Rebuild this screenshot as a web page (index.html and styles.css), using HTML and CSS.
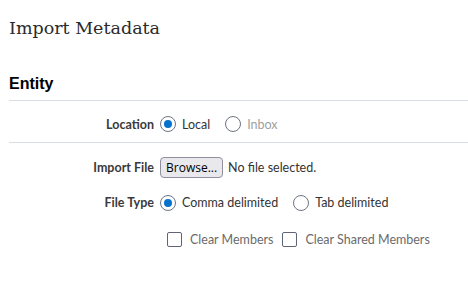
FILE: index.html
```html
<!DOCTYPE html>
<html lang="en">
<head>
    <meta charset="UTF-8">
    <title>Import Metadata</title>
    <link rel="stylesheet" href="styles.css">
</head>
<body>
    <h1 class="page-title">Import Metadata</h1>

    <section class="panel">
        <h2 class="panel-title">Entity</h2>

        <div class="row row-location">
            <span class="label">Location</span>
            <div class="field">
                <label class="option">
                    <span class="radio checked"></span>
                    <span>Local</span>
                </label>
                <label class="option disabled">
                    <span class="radio"></span>
                    <span>Inbox</span>
                </label>
            </div>
        </div>

        <div class="row">
            <span class="label">Import File</span>
            <div class="field">
                <button type="button" class="browse-btn">Browse...</button>
                <span class="file-name">No file selected.</span>
            </div>
        </div>

        <div class="row">
            <span class="label">File Type</span>
            <div class="field">
                <label class="option">
                    <span class="radio checked"></span>
                    <span>Comma delimited</span>
                </label>
                <label class="option">
                    <span class="radio"></span>
                    <span>Tab delimited</span>
                </label>
            </div>
        </div>

        <div class="row row-checks">
            <span class="label"></span>
            <div class="field checks">
                <label class="option">
                    <span class="checkbox"></span>
                    <span>Clear Members</span>
                </label>
                <label class="option">
                    <span class="checkbox"></span>
                    <span>Clear Shared Members</span>
                </label>
            </div>
        </div>
    </section>
</body>
</html>
```

FILE: styles.css
```css
* {
    margin: 0;
    padding: 0;
    box-sizing: border-box;
}

body {
    font-family: Lato, 'Open Sans', sans-serif;
    font-size: 12.5px;
    color: #333;
    background: white;
    padding: 18px 0 0 9px;
}

.page-title {
    font-family: 'DejaVu Serif', Georgia, serif;
    font-size: 17.5px;
    font-weight: normal;
    color: #2b2b2b;
    margin-bottom: 37px;
}

.panel-title {
    font-family: 'Liberation Sans', Arial, sans-serif;
    font-size: 16px;
    font-weight: bold;
    color: #000;
    padding-bottom: 7px;
    border-bottom: 1px solid #d9dee5;
}

.row {
    display: flex;
    align-items: center;
    gap: 6px;
    min-height: 35px;
}

.row-location {
    min-height: 42px;
    padding-top: 5px;
    border-bottom: 1px solid #d9dee5;
    margin-bottom: 7px;
}

.row-checks {
    padding-top: 3px;
}

.label {
    width: 145px;
    text-align: right;
    font-weight: bold;
    color: #3a3a3a;
}

.field {
    display: flex;
    align-items: center;
    gap: 15px;
}

.option {
    display: flex;
    align-items: center;
    gap: 6px;
}

.option.disabled {
    color: #a0a0a0;
}

.radio {
    width: 16px;
    height: 16px;
    border: 1px solid #6e7384;
    border-radius: 50%;
    display: flex;
    align-items: center;
    justify-content: center;
}

.radio.checked::after {
    content: '';
    width: 8px;
    height: 8px;
    border-radius: 50%;
    background: #0572ce;
}

.browse-btn {
    font-family: 'Open Sans', sans-serif;
    font-size: 12px;
    color: #000;
    background: #e9e9ed;
    border: 1px solid #8f8f9d;
    border-radius: 4px;
    padding: 1px 5px;
}

.file-name {
    margin-left: -10px;
}

.checks {
    padding-left: 7px;
    gap: 9px;
    color: #6b6b6b;
}

.checkbox {
    width: 15px;
    height: 15px;
    border: 1px solid #5f6478;
    border-radius: 2px;
}

.checks .option {
    gap: 8px;
}
```
